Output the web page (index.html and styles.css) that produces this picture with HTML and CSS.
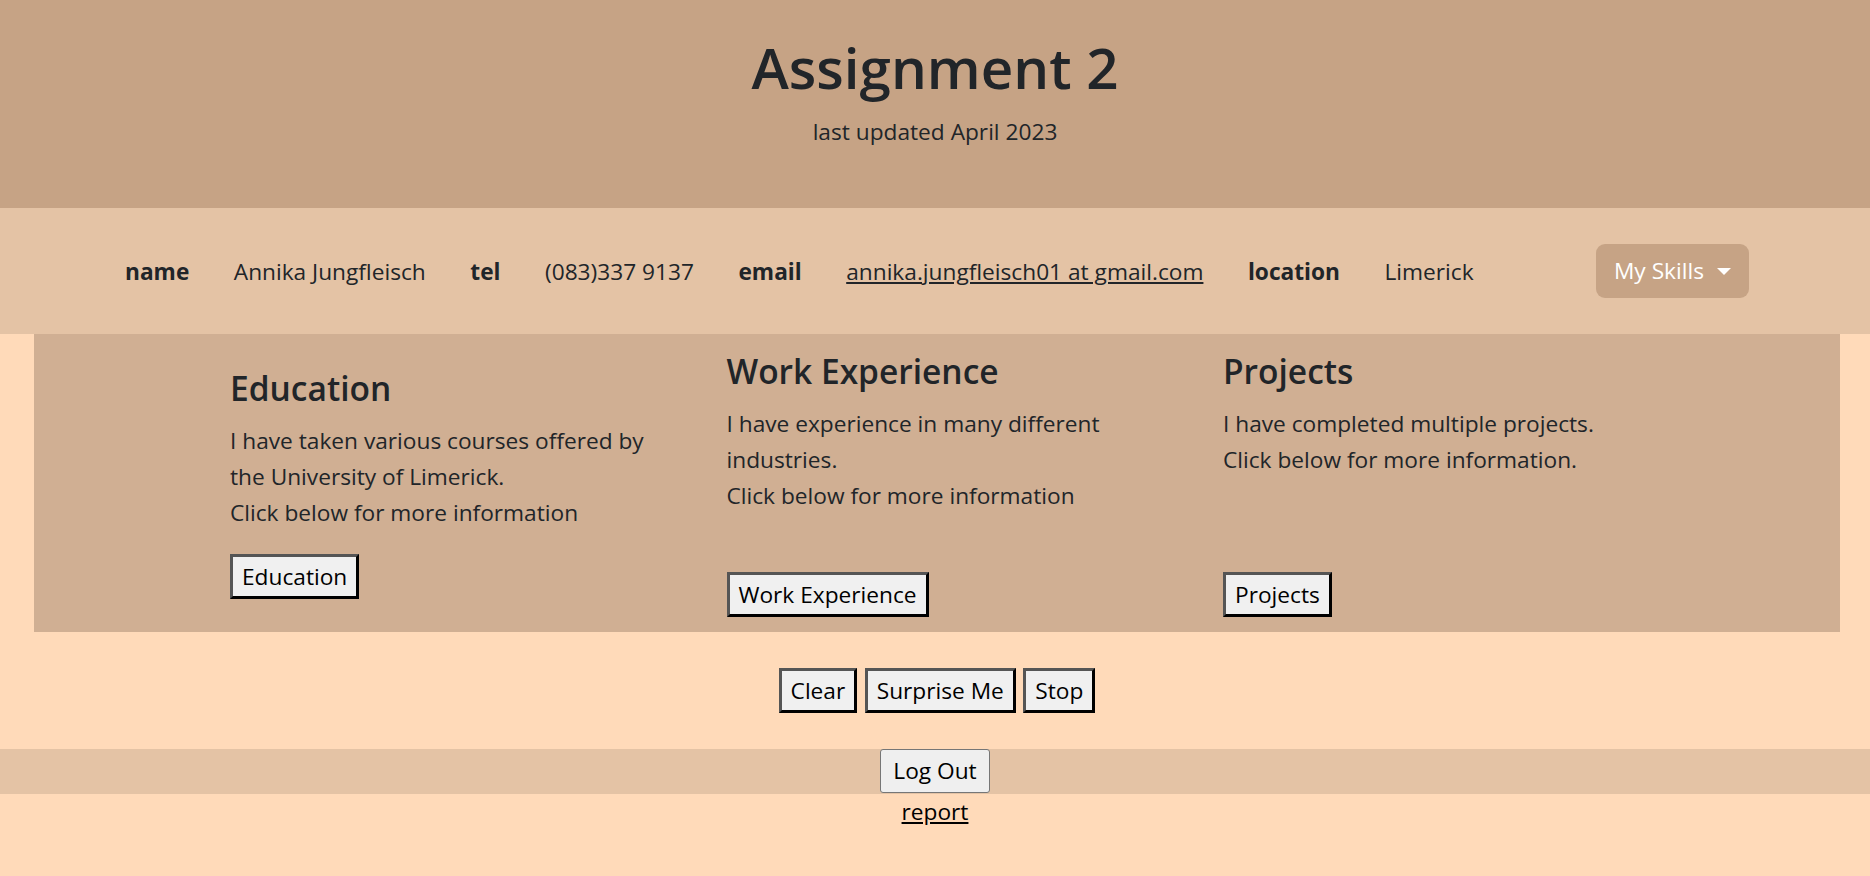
FILE: index.html
```html
<!DOCTYPE html>
<html lang="en">
<head>
<meta charset="utf-8">
<title>Assignment 2</title>
<link rel="stylesheet" href="styles.css">
</head>
<body>
<header class="site-header">
  <h1 class="title">Assignment 2</h1>
  <p class="subtitle">last updated April 2023</p>
</header>

<nav class="info-bar">
  <div class="info-list">
    <span class="label">name</span>
    <span class="value">Annika Jungfleisch</span>
    <span class="label">tel</span>
    <span class="value">(083)337 9137</span>
    <span class="label">email</span>
    <a class="value link" href="#">annika.jungfleisch01 at gmail.com</a>
    <span class="label">location</span>
    <span class="value">Limerick</span>
  </div>
  <button class="skills-btn" type="button">My Skills<span class="caret"></span></button>
</nav>

<main class="sections">
  <section class="col col-center">
    <h2 class="col-title">Education</h2>
    <p class="col-text">I have taken various courses offered by the University of Limerick.<br>Click below for more information</p>
    <button class="btn-classic" type="button">Education</button>
  </section>
  <section class="col col-bottom">
    <h2 class="col-title">Work Experience</h2>
    <p class="col-text">I have experience in many different industries.<br>Click below for more information</p>
    <button class="btn-classic" type="button">Work Experience</button>
  </section>
  <section class="col col-bottom">
    <h2 class="col-title">Projects</h2>
    <p class="col-text">I have completed multiple projects.<br>Click below for more information.</p>
    <button class="btn-classic" type="button">Projects</button>
  </section>
</main>

<div class="controls">
  <button class="btn-classic" type="button">Clear</button>
  <button class="btn-classic" type="button">Surprise Me</button>
  <button class="btn-classic" type="button">Stop</button>
</div>

<div class="logout-bar">
  <button class="btn-logout" type="button">Log Out</button>
</div>

<div class="report">
  <a class="report-link" href="#">report</a>
</div>
</body>
</html>
```

FILE: styles.css
```css
* {
  box-sizing: border-box;
}

html, body {
  margin: 0;
  padding: 0;
}

body {
  background: #ffdab9;
  color: #212529;
  font-family: "Open Sans", "Noto Sans", sans-serif;
  font-size: 22.7px;
  line-height: 36px;
  min-height: 876px;
}

.site-header {
  background: #c6a385;
  text-align: center;
  padding: 32px 0 58px;
}

.title {
  margin: 0 0 10px;
  font-size: 56.5px;
  font-weight: 600;
  line-height: 72px;
}

.subtitle {
  margin: 0;
}

.info-bar {
  background: #e4c3a5;
  height: 126px;
  display: flex;
  align-items: center;
  padding: 0 121px 0 125px;
}

.info-list {
  display: flex;
  align-items: center;
  gap: 44.5px;
  padding-top: 1px;
}

.label {
  font-weight: 700;
}

.link {
  color: #212529;
  text-decoration: underline;
}

.skills-btn {
  margin-left: auto;
  display: flex;
  align-items: center;
  background: #c6a385;
  color: #fff;
  border: 0;
  border-radius: 9px;
  padding: 9px 18px;
  font: inherit;
  line-height: 36px;
}

.caret {
  margin-left: 13px;
  width: 0;
  height: 0;
  border-top: 7px solid #fff;
  border-left: 7px solid transparent;
  border-right: 7px solid transparent;
}

.sections {
  background: #d0af93;
  margin: 0 30px 0 34px;
  height: 298px;
  display: grid;
  grid-template-columns: repeat(3, 425px);
  column-gap: 71.5px;
  padding-left: 196px;
}

.col {
  display: flex;
  flex-direction: column;
  align-items: flex-start;
}

.col-center {
  align-self: center;
}

.col-bottom {
  padding: 16px 0 15px;
}

.col-bottom .btn-classic {
  margin-top: auto;
}

.col-title {
  margin: 0 0 13px;
  font-size: 33.5px;
  font-weight: 600;
  line-height: 43px;
}

.col-text {
  margin: 0 0 23px;
}

.btn-classic {
  font: inherit;
  line-height: 36px;
  color: #000;
  background: #f0f0f0;
  padding: 1.5px 9px;
  border: 3px solid;
  border-color: #555 #000 #000 #555;
  border-radius: 0;
}

.controls {
  display: flex;
  justify-content: center;
  gap: 7.5px;
  padding: 36px 0;
  margin: 0 30px 0 34px;
}

.logout-bar {
  background: #e4c3a5;
  height: 45px;
  text-align: center;
}

.btn-logout {
  font: inherit;
  line-height: 36px;
  color: #000;
  background: #efefef;
  border: 1px solid #767676;
  border-radius: 3px;
  padding: 3px 12.5px;
}

.report {
  text-align: center;
}

.report-link {
  color: #000;
  text-decoration: underline;
}
```
